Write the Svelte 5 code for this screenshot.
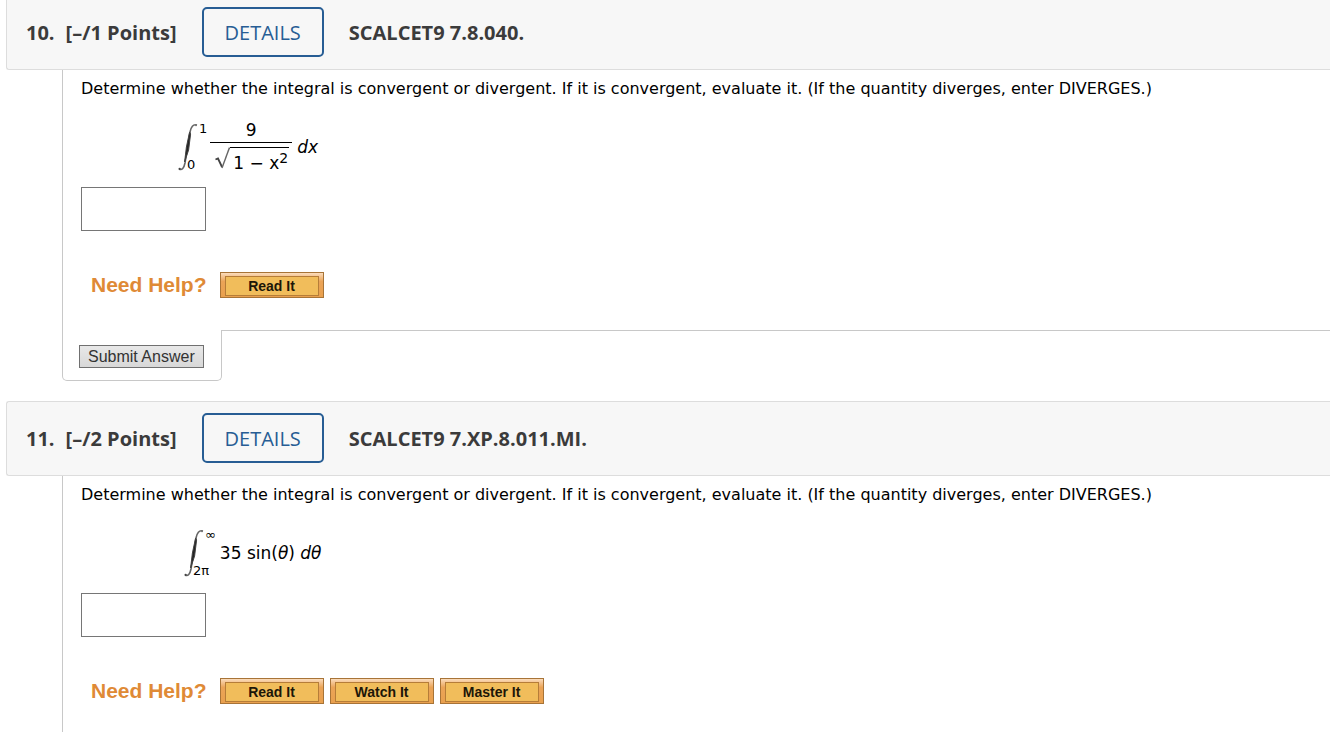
<script lang="ts">
	interface Question {
		number: number;
		points: number;
		code: string;
		help: string[];
	}

	const questions: Question[] = [
		{ number: 10, points: 1, code: 'SCALCET9 7.8.040.', help: ['Read It'] },
		{
			number: 11,
			points: 2,
			code: 'SCALCET9 7.XP.8.011.MI.',
			help: ['Read It', 'Watch It', 'Master It']
		}
	];

	let answers = $state(['', '']);
</script>

{#snippet integral(lower: string, upper: string)}
	<span class="integral">
		<svg width="20" height="48" viewBox="0 0 20 48" aria-hidden="true">
			<path
				d="M1 46 C4 47.5 6 45 7 40 L12 9 C13 4 15 0.8 19 2"
				fill="none"
				stroke="#666"
				stroke-width="1.6"
			/>
			<path d="M6.6 39 L8.4 24 L11.6 9 L12.6 11 L10.6 27 Z" fill="#222" stroke="#444" stroke-width="1" />
			<circle cx="1.6" cy="45.8" r="1.1" fill="#444" />
			<circle cx="18" cy="2.2" r="1" fill="#777" />
		</svg>
		<span class="limits">
			<span class="upper">{upper}</span>
			<span class="lower">{lower}</span>
		</span>
	</span>
{/snippet}

<main class="assignment">
	{#each questions as question, i (question.number)}
		<section class="question">
			<header>
				<h2>
					<span>{question.number}.</span>
					<span>[–/{question.points} Points]</span>
				</h2>
				<button class="details" type="button">DETAILS</button>
				<span>{question.code}</span>
			</header>

			<div class="content">
				<p id="prompt-{question.number}">
					Determine whether the integral is convergent or divergent. If it is convergent, evaluate
					it. (If the quantity diverges, enter DIVERGES.)
				</p>

				{#if i === 0}
					<div class="math">
						{@render integral('0', '1')}
						<span class="fraction">
							<span class="numerator">9</span>
							<span class="denominator">
								<svg width="15" height="22" viewBox="0 0 15 22" aria-hidden="true">
									<path d="M0.5 12.5 L3 11.5 L7 20" fill="none" stroke="#444" stroke-width="1.8" />
									<path d="M7 21 L14.5 0.5" fill="none" stroke="#666" stroke-width="1.4" />
								</svg>
								<span class="radicand">1 − <var>x</var><sup>2</sup></span>
							</span>
						</span>
						<var>dx</var>
					</div>
				{:else}
					<div class="math wide">
						{@render integral('2π', '∞')}
						<span class="integrand">35 sin(<var>θ</var>) <var>dθ</var></span>
					</div>
				{/if}

				<input
					type="text"
					aria-labelledby="prompt-{question.number}"
					bind:value={answers[i]}
				/>

				<div class="help">
					<span class="help-label">Need Help?</span>
					{#each question.help as label}
						<button type="button"><span>{label}</span></button>
					{/each}
				</div>
			</div>

			{#if i === 0}
				<div class="footer">
					<div class="submit">
						<button type="button">Submit Answer</button>
					</div>
					<div class="rule"></div>
				</div>
			{/if}
		</section>
	{/each}
</main>

<style>
	:global(body) {
		background: #fff;
	}

	.assignment {
		display: flex;
		flex-direction: column;
		gap: 20px;
		box-sizing: border-box;
		min-height: 100vh;
		margin-top: -5px;
		padding-left: 6px;
		overflow: hidden;
		color: #000;
		font-family: Verdana, 'DejaVu Sans', sans-serif;
		font-size: 16px;
	}

	.question {
		display: flex;
		flex-direction: column;
	}

	.question:last-child {
		flex: 1;
	}

	header {
		display: flex;
		align-items: center;
		gap: 25px;
		padding: 11px 19px 12px;
		background: #f7f7f7;
		border: 1px solid #ddd;
		border-right: none;
		border-radius: 3px 0 0 3px;
		color: #3b3b3b;
		font-family: 'Open Sans', sans-serif;
		font-size: 20px;
		font-weight: 700;
	}

	h2 {
		display: flex;
		gap: 11px;
		margin: 0;
		font-size: inherit;
	}

	.details {
		height: 50px;
		padding: 0 21px;
		background: transparent;
		border: 2px solid #275d94;
		border-radius: 5px;
		color: #275d94;
		font-family: inherit;
		font-size: 20px;
		font-weight: 500;
		cursor: pointer;
	}

	.content {
		flex: 1;
		margin-left: 56px;
		padding: 8px 18px 32px;
		border-left: 1px solid #c8c8c8;
	}

	p {
		margin: 0;
		line-height: 22px;
	}

	.math {
		display: flex;
		align-items: center;
		height: 52px;
		margin: 21px 0 14px 97px;
		font-size: 17px;
	}

	.math.wide {
		margin-left: 103px;
	}

	var {
		font-style: italic;
	}

	.integral {
		display: flex;
	}

	.limits {
		display: flex;
		flex-direction: column;
		justify-content: space-between;
		font-size: 13px;
		line-height: 12px;
	}

	.lower {
		margin-left: -11px;
	}

	.upper {
		margin-left: 1px;
	}

	.fraction {
		display: flex;
		flex-direction: column;
		align-items: center;
		margin: 0 5px 0 3px;
	}

	.numerator {
		padding-bottom: 2px;
		line-height: 20px;
	}

	.denominator {
		display: flex;
		padding: 4px 3px 0 5px;
		border-top: 1px solid #000;
	}

	.radicand {
		padding: 4px 1px 0 3px;
		border-top: 1px solid #000;
		line-height: 22px;
	}

	.radicand var {
		font-style: normal;
	}

	sup {
		font-size: 14px;
		line-height: 0;
		vertical-align: 6px;
	}

	.integrand {
		margin-left: 4px;
	}

	input {
		display: block;
		box-sizing: border-box;
		width: 125px;
		height: 44px;
		padding: 4px 8px;
		border: 1px solid #767676;
		font: inherit;
	}

	.help {
		display: flex;
		align-items: center;
		gap: 6px;
		margin: 41px 0 0 10px;
		font-family: Arial, 'Liberation Sans', sans-serif;
		font-weight: 700;
	}

	.help-label {
		margin-right: 7px;
		color: #df8a36;
		font-size: 21px;
		line-height: 26px;
	}

	.help button {
		width: 104px;
		height: 26px;
		padding: 3px 4px;
		background: linear-gradient(#fbdcbc, #eba457 35%, #e9a04e);
		border: 1px solid #a87437;
		color: #1c1608;
		font: inherit;
		font-size: 14px;
		cursor: pointer;
	}

	.help button span {
		display: block;
		background: #f1bd5b;
		border: 1px solid #b67d38;
		line-height: 18px;
	}

	.footer {
		display: flex;
		margin-left: 56px;
	}

	.submit {
		padding: 15px 17px 12px 16px;
		border: 1px solid #c8c8c8;
		border-top: none;
		border-radius: 0 0 5px 5px;
	}

	.submit button {
		display: block;
		height: 23px;
		padding: 0 8px;
		background: linear-gradient(#e8e8e8, #d8d8d8);
		border: 1px solid #707070;
		color: #333;
		font-family: Arial, 'Liberation Sans', sans-serif;
		font-size: 16px;
		cursor: pointer;
	}

	.rule {
		flex: 1;
		border-top: 1px solid #c8c8c8;
	}
</style>
